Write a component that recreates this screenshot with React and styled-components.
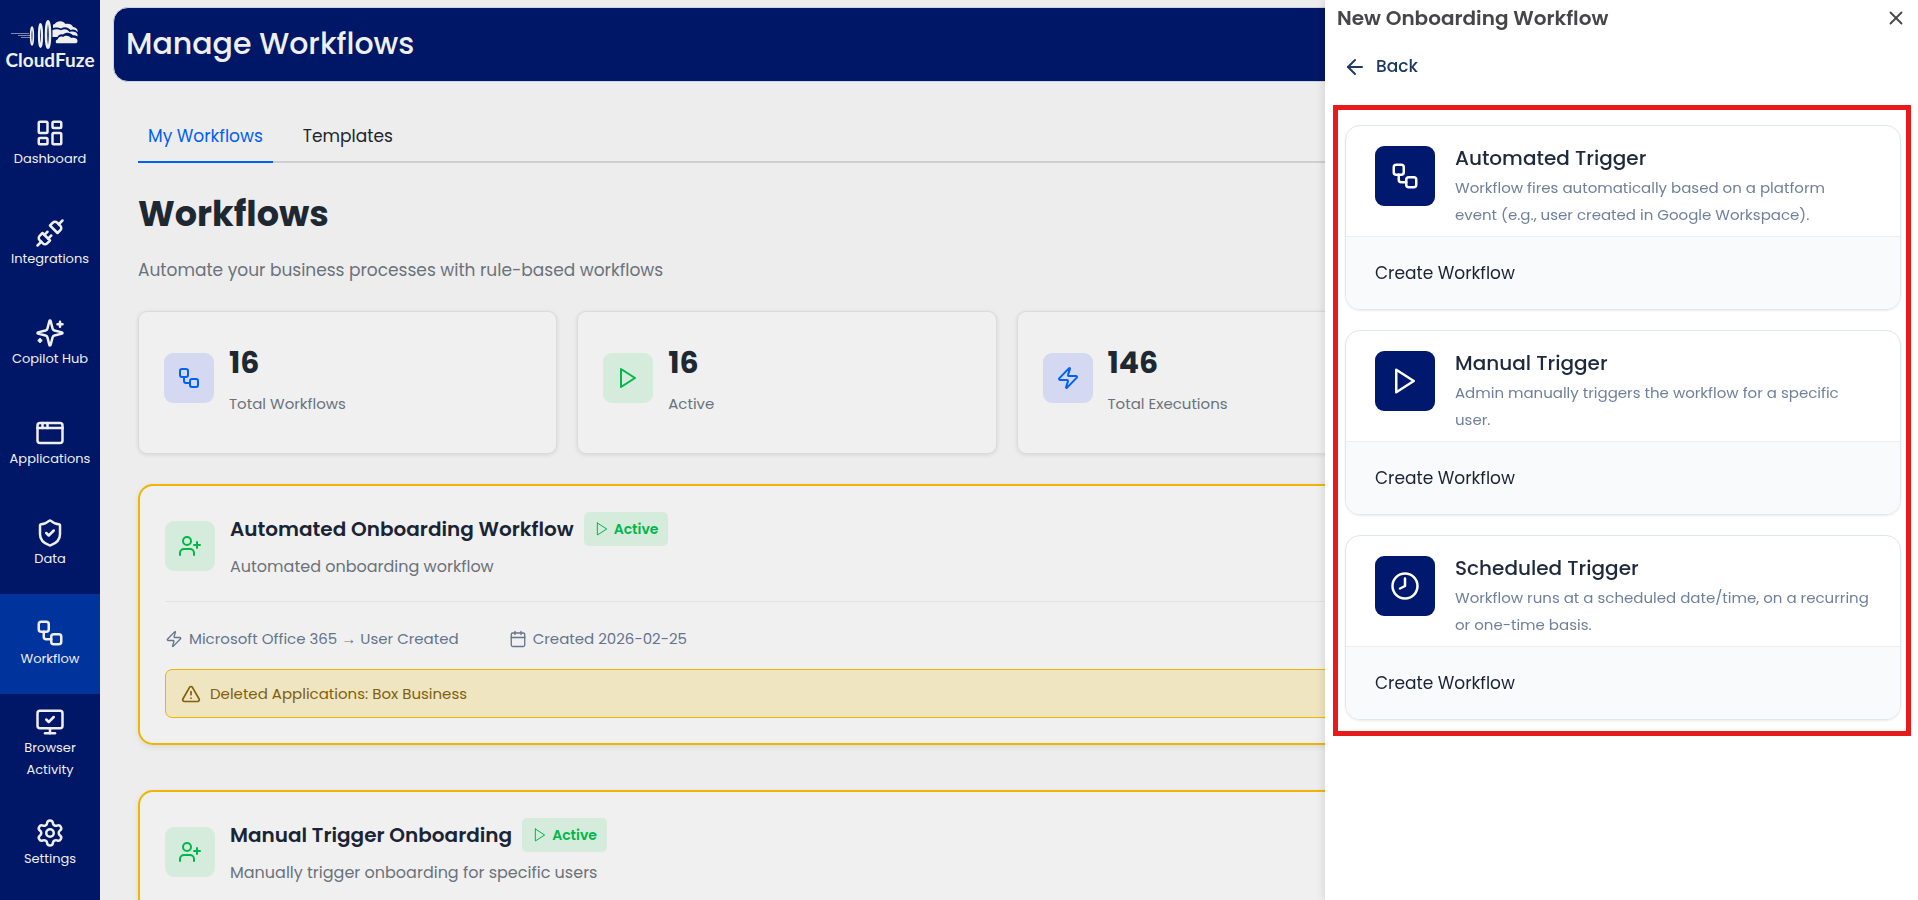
import React from "react";
import styled, { createGlobalStyle } from "styled-components";
import {
    AppWindow, ArrowLeft, Calendar, Clock8, LayoutDashboard, MonitorCheck, Settings,
    ShieldCheck, TriangleAlert, Unplug, UserPlus, Workflow, X, Zap,
} from "lucide-react";
import { FiPlay } from "react-icons/fi";

const GlobalStyle = createGlobalStyle`
    * {
        box-sizing: border-box;
    }

    body {
        margin: 0;
        background-color: #ededed;
        font-family: Poppins, "Liberation Sans", sans-serif;
        font-size: 16px;
        line-height: 27px;
    }

    h1, h2, h3, p {
        margin: 0;
    }

    button {
        padding: 0;
        border: none;
        background: none;
        font-family: inherit;
        cursor: pointer;
    }

    svg {
        display: block;
        flex-shrink: 0;
    }
`;

const Page = styled.div`
    display: flex;
    height: 100vh;
    overflow: hidden;
`;

const Sidebar = styled.nav`
    width: 100px;
    flex-shrink: 0;
    background-color: #001767;
`;

const Brand = styled.a`
    display: flex;
    flex-direction: column;
    align-items: center;
    height: 94px;
    padding-top: 19px;
    color: #efefef;
    font-family: Lato, sans-serif;
    font-size: 19px;
    font-weight: bold;
    line-height: 18px;
    text-decoration: none;
`;

const NavItem = styled.a`
    display: flex;
    flex-direction: column;
    align-items: center;
    justify-content: center;
    height: 100px;
    padding: 0 8px;
    background-color: ${({ $active }) => ($active ? "#00349c" : "transparent")};
    color: #efefef;
    font-size: 13px;
    line-height: 22px;
    text-align: center;
    text-decoration: none;
`;

const Main = styled.main`
    flex: 1;
    min-width: 0;
    padding: 7px 14px 0 13px;
`;

const PageHeader = styled.header`
    padding: 13px 12px 15px;
    border: 1px solid #cfd3e0;
    border-radius: 15px;
    background-color: #001767;
    color: #efefef;
`;

const PageTitle = styled.h1`
    font-size: 30px;
    font-weight: 500;
    line-height: 45px;
`;

const Content = styled.div`
    padding: 30px 29px 0 25px;
`;

const Tabs = styled.div`
    display: flex;
    gap: 20px;
    border-bottom: 2px solid #cfcfd0;
`;

const Tab = styled.button`
    height: 51px;
    margin-bottom: -2px;
    padding: 0 10px 2px;
    border-bottom: 2px solid ${({ $active }) => ($active ? "#0061f2" : "transparent")};
    color: ${({ $active }) => ($active ? "#0061f2" : "#212529")};
    font-size: 17px;
`;

const SectionTitle = styled.h2`
    margin-top: 24px;
    color: #1d2833;
    font-size: 35px;
    font-weight: 700;
    line-height: 54px;
`;

const SectionText = styled.p`
    margin: 16px 0 27px;
    color: #6b727b;
    font-size: 17px;
`;

const Stats = styled.div`
    display: grid;
    grid-template-columns: repeat(4, 1fr);
    gap: 20px;
    margin-bottom: 30px;
`;

const StatCard = styled.div`
    display: flex;
    align-items: center;
    gap: 15px;
    padding: 27px 25px 36px;
    border: 1px solid #dadbdd;
    border-radius: 9px;
    background-color: #f0f0f0;
    box-shadow: 0 1px 4px rgba(0, 0, 0, 0.1);
`;

const StatValue = styled.p`
    margin-bottom: 3px;
    color: #1d2833;
    font-size: 30px;
    font-weight: 700;
    line-height: 48px;
`;

const StatLabel = styled.p`
    color: #6b727b;
    font-size: 15px;
`;

const tones = {
    blue: "background-color: #d4d9f1; color: #0061f2;",
    green: "background-color: #d5ebdc; color: #00b74a;",
};

const IconTile = styled.span`
    display: flex;
    align-items: center;
    justify-content: center;
    flex-shrink: 0;
    width: 50px;
    height: 50px;
    border-radius: 9px;
    ${({ $tone }) => tones[$tone]}
`;

const WorkflowCard = styled.article`
    margin-bottom: 45px;
    padding: 26px 25px 25px;
    border: 2px solid #efb500;
    border-radius: 15px;
    background-color: #f0f0f0;
    box-shadow: 0 2px 6px rgba(0, 0, 0, 0.08);
`;

const WorkflowHead = styled.div`
    display: flex;
    align-items: center;
    gap: 15px;
    padding-bottom: 21px;
    border-bottom: 1px solid #e2e3e4;
`;

const WorkflowTitleRow = styled.div`
    display: flex;
    align-items: center;
    gap: 10px;
    margin-bottom: 7px;
`;

const WorkflowTitle = styled.h3`
    color: #1a2434;
    font-size: 20px;
    font-weight: 600;
`;

const WorkflowText = styled.p`
    color: #6b727b;
    font-size: 16px;
`;

const Badge = styled.span`
    display: flex;
    align-items: center;
    gap: 4px;
    height: 34px;
    padding: 0 10px;
    border-radius: 5px;
    background-color: #d5ebdc;
    color: #00b74a;
    font-size: 14px;
    font-weight: 600;
`;

const Meta = styled.div`
    display: flex;
    gap: 50px;
    padding-top: 23px;
    color: #64748b;
    font-size: 15px;
`;

const MetaItem = styled.span`
    display: flex;
    align-items: center;
    gap: 6px;
`;

const Warning = styled.div`
    display: flex;
    align-items: center;
    gap: 9px;
    margin-top: 17px;
    padding: 10px 15px;
    border: 1px solid #efb500;
    border-radius: 7px;
    background-color: #efe5c1;
    color: #80600a;
    font-size: 15px;
`;

const Drawer = styled.aside`
    position: fixed;
    top: 0;
    right: 0;
    bottom: 0;
    width: 593px;
    padding: 0 7px 0 8px;
    background-color: #fff;
    box-shadow: -2px 0 8px rgba(0, 0, 0, 0.1);
    overflow-y: auto;
`;

const DrawerHead = styled.div`
    display: flex;
    align-items: center;
    justify-content: space-between;
    padding: 0 4px;
    color: #464648;
`;

const DrawerTitle = styled.h2`
    font-size: 20px;
    font-weight: 600;
    line-height: 36px;
`;

const BackButton = styled.button`
    display: flex;
    align-items: center;
    gap: 9px;
    margin: 17px 0 25px 10px;
    color: #1f3a60;
    font-size: 17px;
    font-weight: 500;
    line-height: 27px;
`;

const TriggerList = styled.section`
    display: flex;
    flex-direction: column;
    gap: 20px;
    padding: 15px 5px 11px 7px;
    border: 5px solid #e81b1b;
`;

const TriggerCard = styled.article`
    border: 1px solid #e0e6ee;
    border-radius: 15px;
    box-shadow: 0 1px 2px rgba(0, 0, 0, 0.08);
    overflow: hidden;
`;

const TriggerInfo = styled.div`
    display: flex;
    gap: 20px;
    padding: 20px 30px 8px 29px;
    border-bottom: 1px solid #eceef0;
`;

const TriggerIcon = styled.span`
    display: flex;
    align-items: center;
    justify-content: center;
    flex-shrink: 0;
    width: 60px;
    height: 60px;
    border-radius: 9px;
    background-color: #00196f;
    color: #fff;
`;

const TriggerTitle = styled.h3`
    margin-bottom: 4px;
    color: #1e293b;
    font-size: 20px;
    font-weight: 500;
    line-height: 24px;
`;

const TriggerText = styled.p`
    color: #71809a;
    font-size: 15px;
`;

const CreateButton = styled.button`
    display: block;
    width: 100%;
    padding: 24px 29px;
    background-color: #f9fafc;
    color: #1a2233;
    font-size: 17px;
    line-height: 24px;
    text-align: left;
`;

const Sparkles = ({ size }) => (
    <svg width={size} height={size} viewBox="0 0 24 24" fill="none" stroke="currentColor" strokeWidth="2" strokeLinecap="round" strokeLinejoin="round">
        <path d="M9.937 15.5A2 2 0 0 0 8.5 14.063l-6.135-1.582a.5.5 0 0 1 0-.962L8.5 9.936A2 2 0 0 0 9.937 8.5l1.582-6.135a.5.5 0 0 1 .963 0L14.063 8.5A2 2 0 0 0 15.5 9.937l6.135 1.581a.5.5 0 0 1 0 .964L15.5 14.063a2 2 0 0 0-1.437 1.437l-1.582 6.135a.5.5 0 0 1-.963 0z" />
        <path d="M20 3v4M22 5h-4M4 17v2M5 18H3" />
    </svg>
);

const Logo = () => (
    <svg width="78" height="32" viewBox="0 0 78 32" fill="none" stroke="#efefef">
        <path d="M0 14.500h18M7 16.500h12M10 18.500h9" strokeWidth="0.7" opacity="0.75" />
        <ellipse cx="21" cy="17" rx="1.300" ry="9" strokeWidth="1.700" />
        <ellipse cx="29.500" cy="16.500" rx="1.500" ry="11.500" strokeWidth="2.200" />
        <ellipse cx="37" cy="15.500" rx="2" ry="13.300" strokeWidth="2.500" />
        <path d="M42 5.500c1.500.3 2-1.300 4-2.500 3-1.700 7-.7 8.500 2 3-.6 6.500 0 7.500 3 3 .2 5 2.500 4.800 5-2.500-3-5.300-3-7.300-2-3-3.500-6.500-3.500-9.500-1.500-2.500-1.200-5-1-8-.5z" fill="#efefef" stroke="none" />
        <path d="M41.500 11c3-1 6-.8 8.500.3 3.500-2.200 7-.8 8.500 1.700 3.500-.9 7-.3 8 2.500v2c-1.500-1.200-3-1.500-4.500-1.200-2.500-3-7-3.600-10-.8-2.500-.5-4.500.2-5.500 2.500h-5z" fill="#efefef" stroke="none" />
        <path d="M45.500 24.300c-1.500-1.500-.5-3.500 1.300-4 .7-2.500 3-3.300 5.200-2.300 2.500-2.300 6.500-1.500 8 1 3-.8 6.500 0 6.500 2.800 0 1.300-.5 2.500-1.800 2.500z" fill="#efefef" stroke="none" />
    </svg>
);

const navItems = [
    { label: "Dashboard", Icon: LayoutDashboard },
    { label: "Integrations", Icon: Unplug },
    { label: "Copilot Hub", Icon: Sparkles },
    { label: "Applications", Icon: AppWindow },
    { label: "Data", Icon: ShieldCheck },
    { label: "Workflow", Icon: Workflow, active: true },
    { label: "Browser Activity", Icon: MonitorCheck },
    { label: "Settings", Icon: Settings },
];

const stats = [
    { value: 16, label: "Total Workflows", tone: "blue", Icon: Workflow },
    { value: 16, label: "Active", tone: "green", Icon: FiPlay },
    { value: 146, label: "Total Executions", tone: "blue", Icon: Zap },
];

const workflows = [
    {
        title: "Automated Onboarding Workflow",
        text: "Automated onboarding workflow",
        trigger: "Microsoft Office 365 → User Created",
        created: "2026-02-25",
        deleted: "Box Business",
    },
    {
        title: "Manual Trigger Onboarding",
        text: "Manually trigger onboarding for specific users",
    },
];

const triggers = [
    {
        title: "Automated Trigger",
        text: "Workflow fires automatically based on a platform event (e.g., user created in Google Workspace).",
        Icon: Workflow,
    },
    {
        title: "Manual Trigger",
        text: "Admin manually triggers the workflow for a specific user.",
        Icon: FiPlay,
    },
    {
        title: "Scheduled Trigger",
        text: "Workflow runs at a scheduled date/time, on a recurring or one-time basis.",
        Icon: Clock8,
    },
];

const WorkflowPresenter = ({ title, text, trigger, created, deleted }) => (
    <WorkflowCard>
        <WorkflowHead>
            <IconTile $tone="green"><UserPlus size={24} /></IconTile>
            <div>
                <WorkflowTitleRow>
                    <WorkflowTitle>{title}</WorkflowTitle>
                    <Badge><FiPlay size={16} strokeWidth={1.5} />Active</Badge>
                </WorkflowTitleRow>
                <WorkflowText>{text}</WorkflowText>
            </div>
        </WorkflowHead>
        {trigger && (
            <Meta>
                <MetaItem><Zap size={18} strokeWidth={1.75} />{trigger}</MetaItem>
                <MetaItem><Calendar size={18} strokeWidth={1.75} />Created {created}</MetaItem>
            </Meta>
        )}
        {deleted && <Warning><TriangleAlert size={20} />Deleted Applications: {deleted}</Warning>}
    </WorkflowCard>
);

const TriggerPresenter = ({ title, text, Icon }) => (
    <TriggerCard>
        <TriggerInfo>
            <TriggerIcon><Icon size={30} /></TriggerIcon>
            <div>
                <TriggerTitle>{title}</TriggerTitle>
                <TriggerText>{text}</TriggerText>
            </div>
        </TriggerInfo>
        <CreateButton>Create Workflow</CreateButton>
    </TriggerCard>
);

const App = () => (
    <Page>
        <GlobalStyle />
        <Sidebar>
            <Brand href="#"><Logo />CloudFuze</Brand>
            {navItems.map(({ label, Icon, active }) => (
                <NavItem key={label} href="#" $active={active}>
                    <Icon size={30} />
                    {label}
                </NavItem>
            ))}
        </Sidebar>
        <Main>
            <PageHeader><PageTitle>Manage Workflows</PageTitle></PageHeader>
            <Content>
                <Tabs>
                    <Tab $active>My Workflows</Tab>
                    <Tab>Templates</Tab>
                </Tabs>
                <SectionTitle>Workflows</SectionTitle>
                <SectionText>Automate your business processes with rule-based workflows</SectionText>
                <Stats>
                    {stats.map(({ value, label, tone, Icon }) => (
                        <StatCard key={label}>
                            <IconTile $tone={tone}><Icon size={24} /></IconTile>
                            <div>
                                <StatValue>{value}</StatValue>
                                <StatLabel>{label}</StatLabel>
                            </div>
                        </StatCard>
                    ))}
                </Stats>
                {workflows.map((workflow) => <WorkflowPresenter key={workflow.title} {...workflow} />)}
            </Content>
        </Main>
        <Drawer>
            <DrawerHead>
                <DrawerTitle>New Onboarding Workflow</DrawerTitle>
                <button aria-label="Close"><X size={22} color="#464648" /></button>
            </DrawerHead>
            <BackButton><ArrowLeft size={24} />Back</BackButton>
            <TriggerList>
                {triggers.map((trigger) => <TriggerPresenter key={trigger.title} {...trigger} />)}
            </TriggerList>
        </Drawer>
    </Page>
);

export default App;
